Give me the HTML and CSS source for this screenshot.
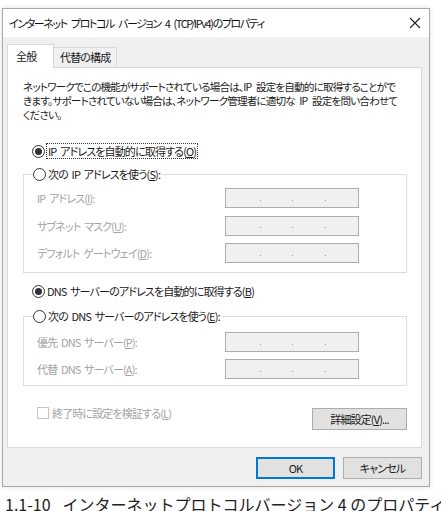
FILE: index.html
```html
<!DOCTYPE html>
<html lang="ja">
<head>
    <meta charset="UTF-8">
    <meta name="viewport" content="width=device-width, initial-scale=1.0">
    <title>インターネット プロトコル バージョン 4 (TCP/IPv4)のプロパティ</title>
    <link rel="stylesheet" href="styles.css">
</head>
<body>
    <div class="dialog">
        <div class="titlebar">
            <span class="title">インターネット プロトコル バージョン 4 (TCP/IPv4)のプロパティ</span>
            <svg class="close" width="12" height="12" viewBox="0 0 12 12"><path d="M1 1L11 11M11 1L1 11" stroke="#222" stroke-width="1.1" fill="none"/></svg>
        </div>
        <div class="body">
            <div class="tabs">
                <div class="tab active">全般</div>
                <div class="tab">代替の構成</div>
            </div>
            <div class="panel">
                <p class="desc">ネットワークでこの機能がサポートされている場合は、IP 設定を自動的に取得することがで<br>きます。サポートされていない場合は、ネットワーク管理者に適切な IP 設定を問い合わせて<br>ください。</p>

                <div class="opt first"><span class="radio on"></span><span class="focus">IP アドレスを自動的に取得する(<u>O</u>)</span></div>

                <fieldset class="group g1">
                    <legend><span class="opt"><span class="radio"></span>次の IP アドレスを使う(<u>S</u>):</span></legend>
                    <div class="field"><span class="lbl">IP アドレス(<u>I</u>):</span><span class="ip"><i></i><i></i><i></i></span></div>
                    <div class="field"><span class="lbl">サブネット マスク(<u>U</u>):</span><span class="ip"><i></i><i></i><i></i></span></div>
                    <div class="field"><span class="lbl">デフォルト ゲートウェイ(<u>D</u>):</span><span class="ip"><i></i><i></i><i></i></span></div>
                </fieldset>

                <div class="opt dns"><span class="radio on"></span>DNS サーバーのアドレスを自動的に取得する(<u>B</u>)</div>

                <fieldset class="group g2">
                    <legend><span class="opt"><span class="radio"></span>次の DNS サーバーのアドレスを使う(<u>E</u>):</span></legend>
                    <div class="field"><span class="lbl">優先 DNS サーバー(<u>P</u>):</span><span class="ip"><i></i><i></i><i></i></span></div>
                    <div class="field"><span class="lbl">代替 DNS サーバー(<u>A</u>):</span><span class="ip"><i></i><i></i><i></i></span></div>
                </fieldset>

                <div class="panel-foot">
                    <span class="check"><span class="box"></span>終了時に設定を検証する(<u>L</u>)</span>
                    <span class="btn adv">詳細設定(<u>V</u>)...</span>
                </div>
            </div>
            <div class="actions">
                <span class="btn default">OK</span>
                <span class="btn">キャンセル</span>
            </div>
        </div>
    </div>
    <p class="caption">1.1-10<span class="gap"></span>インターネットプロトコルバージョン 4 のプロパティ</p>
</body>
</html>
```

FILE: styles.css
```css
* {
  margin: 0;
  padding: 0;
  box-sizing: border-box;
}

body {
  width: 441px;
  height: 511px;
  overflow: hidden;
  background: #fff;
  font-family: "Noto Sans CJK JP", sans-serif;
  font-size: 11px;
  letter-spacing: -0.85px;
  word-spacing: 2px;
  font-feature-settings: "palt";
  color: #1a1a1a;
  padding-top: 8px;
}

u {
  text-decoration: underline;
  text-underline-offset: 1px;
}

/* ウィンドウ枠 */
.dialog {
  width: 428px;
  height: 479px;
  margin-left: 2px;
  border: 1px solid #a9a9a9;
  background: #f0f0f0;
  box-shadow: 0 0 5px rgba(0, 0, 0, 0.12);
  display: flex;
  flex-direction: column;
}

.titlebar {
  height: 28px;
  background: #fff;
  display: flex;
  align-items: center;
  justify-content: space-between;
  padding: 0 8px 0 6px;
}

.title {
  font-size: 11px;
  letter-spacing: -1.4px;
  word-spacing: 3px;
  color: #111;
}

.body {
  flex: 1;
  padding: 7px 7px 0 4px;
}

/* タブ */
.tabs {
  display: flex;
  align-items: flex-end;
  height: 23px;
}

.tab {
  height: 20px;
  width: 63px;
  padding-left: 6px;
  border: 1px solid #d9d9d9;
  border-bottom: none;
  background: #f0f0f0;
  line-height: 19px;
}

.tab.active {
  height: 24px;
  width: 47px;
  padding-left: 8px;
  background: #fff;
  margin-bottom: -1px;
  position: relative;
  z-index: 1;
  line-height: 22px;
}

.tab + .tab {
  border-left: none;
}

.panel {
  height: 381px;
  background: #fff;
  border: 1px solid #d9d9d9;
  padding: 12px 14px 0 15px;
}

.desc {
  font-size: 10.6px;
  word-spacing: 3px;
  line-height: 14px;
  white-space: nowrap;
}

/* ラジオボタン */
.opt {
  display: flex;
  align-items: center;
  height: 16px;
  white-space: nowrap;
}

.opt.first {
  margin-top: 21px;
  padding-left: 9px;
}

.opt.dns {
  margin-top: 10px;
  padding-left: 9px;
}

.radio {
  width: 13px;
  height: 13px;
  border: 1px solid #333;
  border-radius: 50%;
  margin-right: 2px;
  position: relative;
  flex: none;
}

.radio.on::after {
  content: "";
  position: absolute;
  left: 2px;
  top: 2px;
  width: 7px;
  height: 7px;
  border-radius: 50%;
  background: #333;
}

.focus {
  outline: 1px dotted #333;
  outline-offset: 0;
  padding: 0 1px;
  line-height: 14px;
}

/* グループ */
.group {
  border: 1px solid #dcdcdc;
  margin: 7px 0 0 0;
  padding: 6px 12px 9px 13px;
  min-width: 0;
}

.group legend {
  margin-left: -4px;
  padding: 0 2px 0 0;
}

.g2 {
  margin-top: 9px;
  padding-top: 8px;
  padding-bottom: 6px;
}

.field {
  display: flex;
  align-items: center;
  height: 20px;
  color: #a3a3a3;
}

.field + .field {
  margin-top: 7.5px;
}

.g2 .field + .field {
  margin-top: 7px;
}

.lbl {
  width: 188px;
  white-space: nowrap;
}

.ip {
  width: 134px;
  height: 20px;
  border: 1px solid #adadad;
  background: #f0f0f0;
  display: flex;
  justify-content: space-around;
  align-items: center;
  padding: 0 16px 0 18px;
}

.ip i {
  width: 1px;
  height: 1px;
  background: #9a9a9a;
  margin-top: 4px;
}

/* 下部 */
.panel-foot {
  display: flex;
  justify-content: space-between;
  align-items: flex-start;
  margin-top: 21px;
}

.check {
  display: flex;
  align-items: center;
  color: #a3a3a3;
  margin-left: 14px;
  margin-top: -2px;
  height: 16px;
}

.check .box {
  width: 12px;
  height: 12px;
  border: 1px solid #c4c4c4;
  margin-right: 3px;
}

.btn {
  display: flex;
  align-items: center;
  justify-content: center;
  height: 22px;
  background: #e1e1e1;
  border: 1px solid #adadad;
  color: #1a1a1a;
}

.adv {
  width: 95px;
  margin-top: 1px;
}

.actions {
  display: flex;
  justify-content: flex-end;
  gap: 8px;
  margin-top: 9px;
}

.actions .btn {
  width: 79px;
}

.btn.default {
  border: 1px solid #0078d7;
  box-shadow: inset 0 0 0 1px #0078d7;
}

.caption {
  margin: 7px 0 0 5px;
  font-size: 16px;
  letter-spacing: 0;
  word-spacing: 0;
  font-feature-settings: normal;
  color: #222;
  white-space: nowrap;
  line-height: 20px;
}

.caption .gap {
  display: inline-block;
  width: 12px;
}
```
